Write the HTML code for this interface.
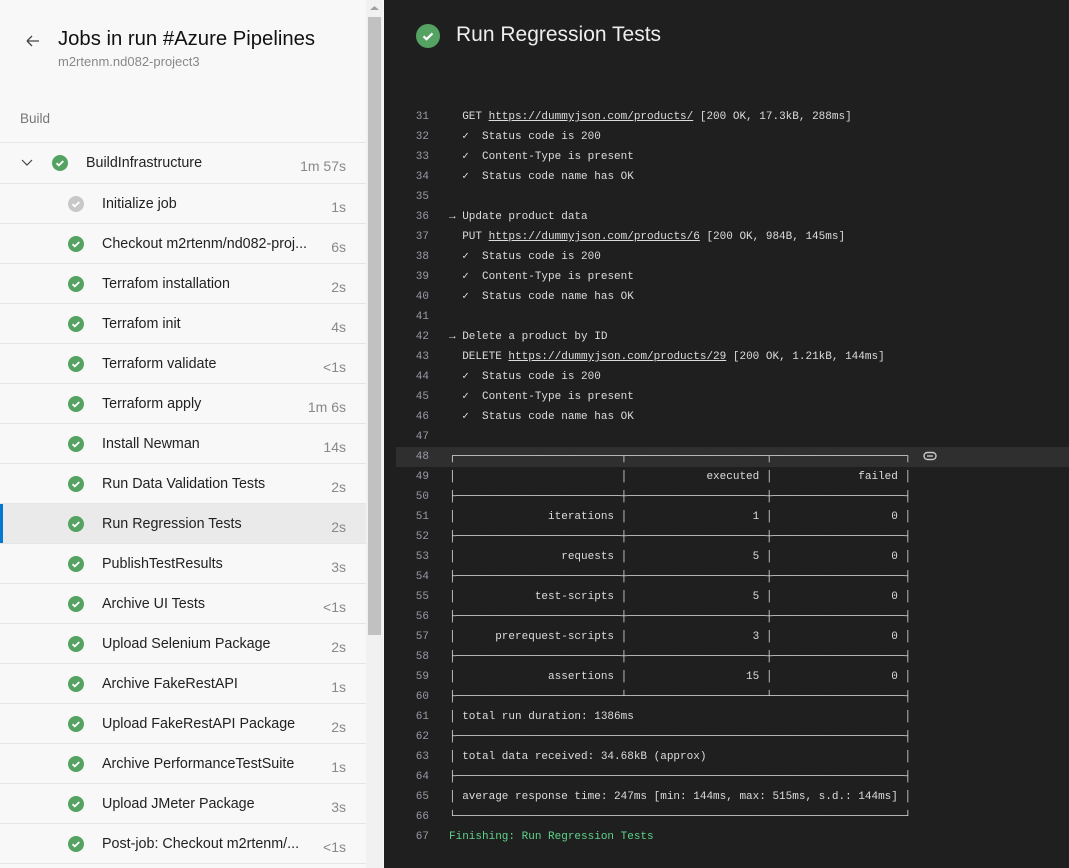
<!DOCTYPE html>
<html><head><meta charset="utf-8"><style>
*{margin:0;padding:0;box-sizing:border-box}
body{width:1069px;height:868px;overflow:hidden;background:#1f1f1f;font-family:"Liberation Sans",sans-serif;position:relative}
#left{position:absolute;left:0;top:0;width:384px;height:868px;background:#f8f8f8;overflow:hidden}
.title{position:absolute;left:58px;top:28px;font-size:20.3px;color:#111}
.sub{position:absolute;left:58px;top:54px;font-size:13px;color:#888}
.back{position:absolute;left:24px;top:30px}
.build{position:absolute;left:20px;top:111px;font-size:13.5px;color:#777}
.hr{position:absolute;left:0;width:366px;height:1px;background:#e6e6e6}
.row{position:absolute;left:0;width:366px;height:40px}
.row .n{position:absolute;left:102px;top:12px;font-size:14.3px;color:#222;white-space:nowrap}
.row .d{position:absolute;right:20px;top:15px;font-size:14px;color:#888}
.row svg{position:absolute;left:67px;top:11px}
.sel{background:#eaeaea}
.sel:before{content:"";position:absolute;left:0;top:0;width:3px;height:40px;background:#0078d4}
#track{position:absolute;left:366px;top:0;width:17px;height:868px;background:#f1f1f1}
#thumb{position:absolute;left:368px;top:17px;width:13px;height:618px;background:#c1c1c1}
#right{position:absolute;left:384px;top:0;width:685px;height:868px}
.rt{position:absolute;left:72px;top:23px;font-size:21px;color:#eee}
.log{position:absolute;left:0;width:685px;height:20px;font-family:"Liberation Mono","DejaVu Sans Mono",monospace;font-size:11px;line-height:20px;color:#dcdcdc;white-space:pre}
.log .ln{position:absolute;right:640px;color:#9a9aa6}
.log .t{position:absolute}
.log u{text-decoration:underline}
.hl{background:#2f2f2f;left:12px;width:673px}
</style></head><body>
<div id="left">
<svg class="back" width="18" height="22" viewBox="0 0 18 22"><path d="M3 11h12M3 11l5-5M3 11l5 5" stroke="#444" stroke-width="1.3" fill="none"/></svg>
<div class="title">Jobs in run #Azure Pipelines</div>
<div class="sub">m2rtenm.nd082-project3</div>
<div class="build">Build</div>
<div class="hr" style="top:142px"></div>
<div class="row" style="top:143px">
<svg style="left:20px;top:15px" width="14" height="10" viewBox="0 0 14 10"><path d="M2 2l5 5 5-5" stroke="#444" stroke-width="1.2" fill="none"/></svg>
<svg style="left:51px;top:11px" width="18" height="18" viewBox="0 0 18 18"><circle cx="9" cy="9" r="8" fill="#55a362"/><path d="M5.5 9.2l2.3 2.2 4.5-4.4" stroke="#fff" stroke-width="1.8" fill="none"/></svg>
<div class="n" style="left:86px">BuildInfrastructure</div><div class="d">1m 57s</div></div>
<div id="rows"></div>
<div id="track"></div><div id="thumb"></div>
<svg style="position:absolute;left:369px;top:5px" width="11" height="6"><path d="M1 5l4.5-4 4.5 4z" fill="#a0a0a0"/></svg>
</div>
<div id="right">
<svg style="position:absolute;left:32px;top:24px" width="24" height="24" viewBox="0 0 24 24"><circle cx="12" cy="12" r="12" fill="#55a362"/><path d="M7.5 12.3l3 2.9 6-5.8" stroke="#fff" stroke-width="2.2" fill="none"/></svg>
<div class="rt">Run Regression Tests</div>
<div id="logs"></div>
<svg style="position:absolute;left:539px;top:451px" width="14" height="10" viewBox="0 0 14 10"><rect x="1" y="1.5" width="12" height="7" rx="3.5" stroke="#c8c8c8" stroke-width="1.4" fill="none"/><path d="M4 5h6" stroke="#c8c8c8" stroke-width="1.4"/></svg>
</div>
<script>
var items=[["Initialize job","1s",1],["Checkout m2rtenm/nd082-proj...","6s"],["Terrafom installation","2s"],["Terrafom init","4s"],["Terraform validate","<1s"],["Terraform apply","1m 6s"],["Install Newman","14s"],["Run Data Validation Tests","2s"],["Run Regression Tests","2s",0,1],["PublishTestResults","3s"],["Archive UI Tests","<1s"],["Upload Selenium Package","2s"],["Archive FakeRestAPI","1s"],["Upload FakeRestAPI Package","2s"],["Archive PerformanceTestSuite","1s"],["Upload JMeter Package","3s"],["Post-job: Checkout m2rtenm/...","<1s"]];
var h="";items.forEach(function(it,i){var tp=184+40*i;var c=it[2]?"#c8c8c8":"#55a362";
h+='<div class="hr" style="top:'+(tp-1)+'px"></div><div class="row'+(it[3]?' sel':'')+'" style="top:'+tp+'px"><svg width="18" height="18" viewBox="0 0 18 18"><circle cx="9" cy="9" r="8" fill="'+c+'"/><path d="M5.5 9.2l2.3 2.2 4.5-4.4" stroke="#fff" stroke-width="1.8" fill="none"/></svg><div class="n">'+it[0].replace(/</g,"&lt;")+'</div><div class="d">'+it[1].replace(/</g,"&lt;")+'</div></div>';});
h+='<div class="hr" style="top:863px"></div>';
document.getElementById("rows").innerHTML=h;
function pad(s,n,r){while(s.length<n)s=r?" "+s:s+" ";return s}
function rep(c,n){return new Array(n+1).join(c)}
var bTop="┌"+rep("─",25)+"┬"+rep("─",21)+"┬"+rep("─",20)+"┐";
var mid="├"+rep("─",25)+"┼"+rep("─",21)+"┼"+rep("─",20)+"┤";
var mid2="├"+rep("─",68)+"┤";
function r3(a,b,c){return "│"+pad(a,24,1)+" │"+pad(b,20,1)+" │"+pad(c,19,1)+" │"}
function r1(a){return "│ "+pad(a,67)+"│"}
var L={31:"  GET <u>https://dummyjson.com/products/</u> [200 OK, 17.3kB, 288ms]",32:"  ✓  Status code is 200",33:"  ✓  Content-Type is present",34:"  ✓  Status code name has OK",35:"",36:"→ Update product data",37:"  PUT <u>https://dummyjson.com/products/6</u> [200 OK, 984B, 145ms]",38:"  ✓  Status code is 200",39:"  ✓  Content-Type is present",40:"  ✓  Status code name has OK",41:"",42:"→ Delete a product by ID",43:"  DELETE <u>https://dummyjson.com/products/29</u> [200 OK, 1.21kB, 144ms]",44:"  ✓  Status code is 200",45:"  ✓  Content-Type is present",46:"  ✓  Status code name has OK",47:"",
48:bTop,49:r3("","executed","failed"),50:mid,51:r3("iterations","1","0"),52:mid,53:r3("requests","5","0"),54:mid,55:r3("test-scripts","5","0"),56:mid,57:r3("prerequest-scripts","3","0"),58:mid,59:r3("assertions","15","0"),60:"├"+rep("─",25)+"┴"+rep("─",21)+"┴"+rep("─",20)+"┤",61:r1("total run duration: 1386ms"),62:mid2,63:r1("total data received: 34.68kB (approx)"),64:mid2,65:r1("average response time: 247ms [min: 144ms, max: 515ms, s.d.: 144ms]"),66:"└"+rep("─",68)+"┘",67:'<span style="color:#5fd38a">Finishing: Run Regression Tests</span>'};
var g="";for(var n=31;n<=67;n++){var y=107+20*(n-31);var hl=n==48;var cls=hl?"log hl":"log";var tl=hl?53:65;
g+='<div class="'+cls+'" style="top:'+y+'px"><span class="ln">'+n+'</span><span class="t" style="left:'+tl+'px">'+L[n]+'</span></div>';}
document.getElementById("logs").innerHTML=g;
</script>
</body></html>
